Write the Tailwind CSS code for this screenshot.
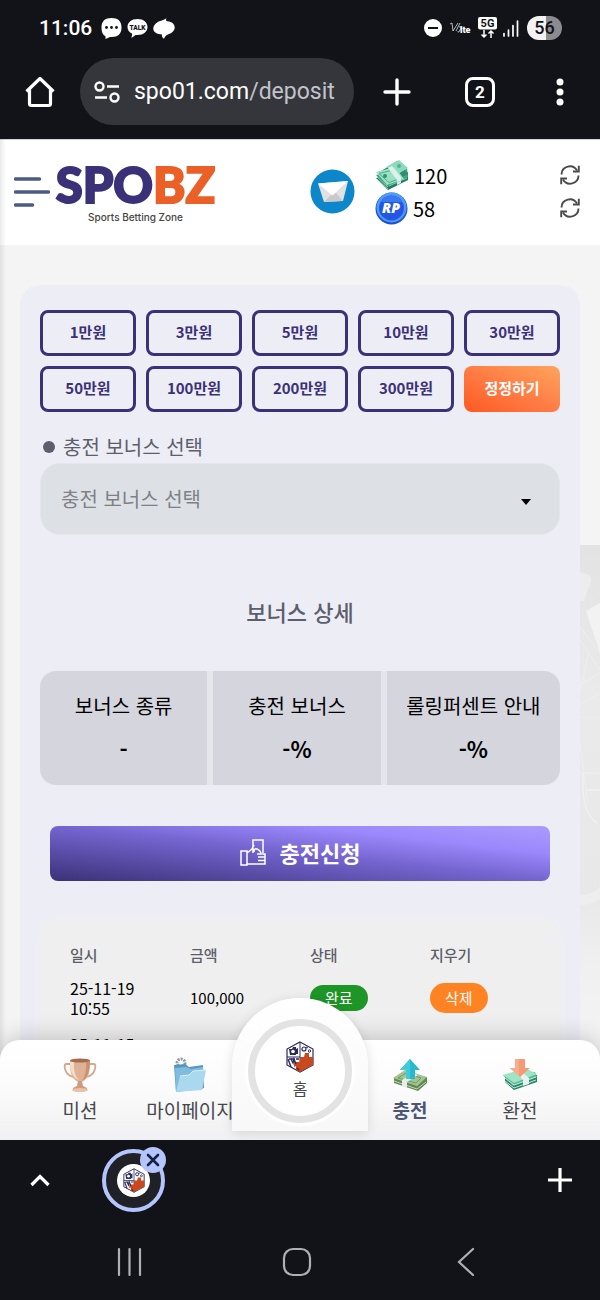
<!doctype html>
<html lang="ko">
<head>
  <meta charset="utf-8">
  <meta name="viewport" content="width=device-width, initial-scale=1">
  <title>SPOBZ</title>
  <script src="https://cdn.jsdelivr.net/npm/@tailwindcss/browser@4"></script>
</head>
<body class="h-screen flex flex-col overflow-hidden antialiased bg-[#121318] font-['Noto_Sans_CJK_KR',sans-serif]">

<!-- Shared icons -->
<svg class="hidden">
  <symbol id="cube" viewBox="0 0 28 32">
    <path d="M14 1 27 8v16L14 31 1 24V8Z" fill="#fff" stroke="#2c2a5e" stroke-width="1.2" />
    <path d="M1 16h13V1M14 16v15" fill="none" stroke="#2c2a5e" stroke-width="1" />
    <path d="M14 16h4l1-4h4v4h4v8l-13 7-4-2v-4l-2 1v-5h6Z" fill="#c9481d" />
    <path d="M3 8h3l1-2h3v2l2-1v6h-2v1H4Z" fill="#2c2a5e" />
    <circle cx="7" cy="10.500" r="1.800" fill="#fff" />
    <path d="M2 18l3 8M5 18l2 4 1-4 2 5M10 18h3M3 18h6M11 27l2 2" stroke="#2c2a5e" stroke-width="1.400" fill="none" />
    <circle cx="18" cy="8" r="2" fill="none" stroke="#2c2a5e" stroke-width="1.200" />
    <circle cx="23.500" cy="10" r="1.200" fill="none" stroke="#2c2a5e" />
    <path d="M20 6l2 1" stroke="#2c2a5e" />
  </symbol>
  <symbol id="refresh" viewBox="0 0 20 20">
    <g fill="none" stroke="#4a4a4a" stroke-width="1.900">
      <path d="M1.500 9.500a8.300 8.300 0 0 1 15.500-4M18.500 10.500a8.300 8.300 0 0 1-15.500 4" />
      <path d="M18.800.8v5.700h-5.800M1.200 19.200v-5.700h5.800" />
    </g>
  </symbol>
</svg>

<!-- Status bar -->
<div class="flex items-center h-14 shrink-0 pl-[39px] pr-[38px] text-white font-[Roboto,sans-serif]">
  <span class="text-[21px] leading-7 font-medium mr-[9px]">11:06</span>
  <div class="flex items-center gap-[5px]">
    <svg class="w-[21px] h-[21px]" viewBox="0 0 21 21">
      <path d="M10.500 0C17 0 20.500 3 20.500 9.500S17 19 10.500 19H9l-4.500 2v-2.700C1.500 17 .5 14 .5 9.500.5 3 4 0 10.500 0Z" fill="#fff" />
      <g fill="#121318"><circle cx="5.500" cy="9.500" r="1.400" /><circle cx="10.500" cy="9.500" r="1.400" /><circle cx="15.500" cy="9.500" r="1.400" /></g>
    </svg>
    <svg class="w-[21px] h-[21px]" viewBox="0 0 21 21">
      <path d="M10.500 1C16.500 1 20.500 4.500 20.500 9s-4 8-10 8c-1 0-1.500 0-2 0L4.500 20l.7-4.200C2.200 14.300.5 12 .5 9c0-4.500 4-8 10-8Z" fill="#fff" />
      <text x="10.500" y="11.500" text-anchor="middle" font-size="6.500" font-weight="900" fill="#121318">TALK</text>
    </svg>
    <svg class="w-[22px] h-[21px]" viewBox="0 0 22 21">
      <path d="M13.500.2C12.500 2 13 3 14.500 3.200c4.500.5 7.200 3 7.200 6.300 0 3.500-3 5.500-6.200 6.800-2.500 1-3.500 2.200-4.500 4.500-1.500-1-2.500-2.500-2-4.300C4 16.500.3 14 .3 10.800c0-3.700 3-6 6-7.500C9 2.500 11 1.500 13.500.2Z" fill="#fff" />
    </svg>
  </div>
  <div class="flex items-center ml-auto">
    <svg class="w-[18px] h-[18px] mr-2" viewBox="0 0 18 18"><circle cx="9" cy="9" r="9" fill="#fff" /><path d="M4 9h10" stroke="#121318" stroke-width="2" /></svg>
    <svg class="w-[23px] h-[14px] mr-[5px]" viewBox="0 0 23 14">
      <path d="M0 3l2-1 1 8L8 2M6 10l4-8M9 6q3-1 1 3t-2 1" fill="none" stroke="#ddd" stroke-width=".8" />
      <text x="10" y="11.500" font-size="9" font-weight="900" fill="#fff">lte</text>
    </svg>
    <svg class="w-[19px] h-[22px] mr-[6px]" viewBox="0 0 19 22">
      <rect width="19" height="12.500" rx="2" fill="#fff" />
      <text x="9.500" y="10" text-anchor="middle" font-size="11" font-weight="700" fill="#121318">5G</text>
      <path d="M6 13v7M3.500 17.500 6 20l2.500-2.500M13 21v-7M10.500 16.500 13 14l2.500 2.500" fill="none" stroke="#fff" stroke-width="1.500" />
    </svg>
    <svg class="w-[16px] h-[17px] mr-2" viewBox="0 0 16 17"><path d="M1 13.500V16M5.500 10v6M10 5.500V16M14.500 1v15" stroke="#fff" stroke-width="1.700" stroke-linecap="round" /></svg>
    <span class="h-6 w-[35px] rounded-full text-center text-[18px] leading-6 font-medium text-[#121318] bg-linear-to-r from-[#f2f2f2] from-55% to-[#8c8c8f] to-55%">56</span>
  </div>
</div>

<!-- Browser toolbar -->
<div class="flex items-center h-[83px] shrink-0 pb-3 pl-6 pr-9 text-white font-[Roboto,sans-serif]">
  <button type="button" aria-label="Home">
    <svg class="w-8 h-8" viewBox="0 0 32 32"><path d="M2.500 15.500 16 2.500l13.500 13M5.500 13v14.500a2 2 0 0 0 2 2h17a2 2 0 0 0 2-2V13" fill="none" stroke="#fff" stroke-width="3.200" stroke-linejoin="round" /></svg>
  </button>
  <div class="flex items-center gap-[14px] flex-1 h-[67px] ml-6 mr-[29px] pl-[14px] pr-3 rounded-full bg-[#35363b]">
    <svg class="w-[26px] h-[22px] shrink-0" viewBox="0 0 26 22">
      <g fill="none" stroke="#fff" stroke-width="2.400"><circle cx="5.500" cy="5.500" r="4" /><path d="M13 5.500h12M1 16.500h12" /><circle cx="20.500" cy="16.500" r="4" /></g>
    </svg>
    <p class="text-[23px] leading-8 whitespace-nowrap">spo01.com<span class="text-[#c3c4cb]">/deposit</span></p>
  </div>
  <button type="button" aria-label="New tab">
    <svg class="w-7 h-7" viewBox="0 0 28 28"><path d="M14 2v24M2 14h24" stroke="#fff" stroke-width="3.400" stroke-linecap="round" /></svg>
  </button>
  <button type="button" class="size-[30px] ml-[54px] rounded-lg border-3 border-white text-[17px] leading-6 font-bold">2</button>
  <button type="button" aria-label="Menu" class="ml-[61px]">
    <svg class="w-2 h-7" viewBox="0 0 8 28"><g fill="#fff"><circle cx="4" cy="4" r="3.500" /><circle cx="4" cy="14" r="3.500" /><circle cx="4" cy="24" r="3.500" /></g></svg>
  </button>
</div>

<!-- Site -->
<div class="relative flex flex-col flex-1 min-h-0 overflow-hidden bg-[#f4f4f4]">
  <header class="flex items-center h-[106px] shrink-0 pb-[2px] pl-[14px] pr-5 bg-white border-t border-gray-300">
    <button type="button" aria-label="메뉴">
      <svg class="w-9 h-[30px]" viewBox="0 0 36 30"><path d="M1.500 2h24M1.500 15h33M1.500 28h17" stroke="#4d5b80" stroke-width="3.500" stroke-linecap="round" /></svg>
    </button>
    <a href="#" class="flex flex-col items-center w-[155px] ml-2">
      <span class="font-[Lato,sans-serif] text-[49px] leading-[50px] font-black text-[#3b3178] [-webkit-text-stroke:2px]">SPO<span class="text-[#ea6027]">BZ</span></span>
      <span class="font-[Inter,sans-serif] text-[10px] leading-4 font-medium text-[#444]">Sports Betting Zone</span>
    </a>
    <button type="button" aria-label="쪽지" class="ml-auto mr-5">
      <svg class="size-[45px]" viewBox="0 0 45 45">
        <circle cx="22.500" cy="22.500" r="22" fill="#0c87c9" />
        <path d="M8 14.500 38 12l-5 20-19 1Z" fill="#e1e1e3" />
        <path d="M14 33l8-8 4-1 7 8Z" fill="#c9c9cc" />
        <path d="M8 14.500 38 12 22.500 26.500Z" fill="#fff" />
      </svg>
    </button>
    <div class="flex flex-col w-[205px] text-[20px] leading-[33px]">
      <div class="flex items-center">
        <svg class="w-[34px] h-[32px] mr-[5px]" viewBox="0 0 34 32">
          <path d="M1 19 13 31 33 21V13Z" fill="#207a62" />
          <path d="M1 16 12 28 33 18 32 9Z" fill="#42a887" />
          <path d="M3 14 22 2 33 15 13 26Z" fill="#2c8f73" />
          <path d="M11 8 24 1 33 9 23 15Z" fill="#8cdabb" />
          <path d="M1 13 20 8 29 20 12 26Z" fill="#9ae1c4" />
          <path d="M4 14.500 18 11l7 8.500-11 4Z" fill="none" stroke="#4eb08f" />
          <circle cx="10" cy="17" r="2" fill="#358f73" /><circle cx="24" cy="7" r="2" fill="#53b492" />
          <path d="M13 9l4-2 9 11v6l-4 2v-5Z" fill="#def0ed" />
          <path d="M2 18l11 10M2 20l11 10M14 27l18-8" stroke="#95d6bd" stroke-width=".8" />
        </svg>
        <span>120</span>
        <button type="button" aria-label="새로고침" class="ml-auto"><svg class="size-5"><use href="#refresh" /></svg></button>
      </div>
      <div class="flex items-center">
        <svg class="size-[33px] mr-[5px]" viewBox="0 0 33 33">
          <circle cx="16.500" cy="16.500" r="16" fill="#1d50cc" />
          <circle cx="16.500" cy="15.500" r="15" fill="#4f9bf8" />
          <circle cx="16.500" cy="16" r="12.500" fill="#2356e4" />
          <path d="M6 10a12 12 0 0 1 21 0Z" fill="#3a78f4" />
          <text x="16" y="21" text-anchor="middle" font-family="Open Sans" font-size="14" font-weight="800" font-style="italic" fill="#fff">RP</text>
        </svg>
        <span>58</span>
        <button type="button" aria-label="새로고침" class="ml-auto"><svg class="size-5"><use href="#refresh" /></svg></button>
      </div>
    </div>
  </header>

  <main class="relative px-5">
    <!-- Faded cards behind the panel -->
    <svg class="absolute right-0 top-[300px] w-5 h-[500px]" viewBox="0 0 20 500">
      <defs>
        <linearGradient id="fade" x1="0" y1="0" x2="0" y2="1">
          <stop offset="0" stop-color="#e3e3e3" /><stop offset=".3" stop-color="#eaeaea" /><stop offset=".7" stop-color="#e8e8e8" /><stop offset=".85" stop-color="#f0f0f0" /><stop offset="1" stop-color="#f4f4f4" />
        </linearGradient>
      </defs>
      <path d="M0 0h20v500H0Z" fill="url(#fade)" />
      <path d="M0 27l9 3q3 3 2 6L4 56H0Z" fill="#ededed" />
      <path d="M6 66 20 58v50Z" fill="#f2f2f2" />
      <path d="M0 82 20 108M0 95l20 30M0 140l20-12M0 160l20-12M8 110l-8 36M0 172h20M0 200l8 60M0 228h20" fill="none" stroke="#efefef" />
      <path d="M3 228q-2 40 14 50M6 245h14" fill="none" stroke="#f0f0f0" stroke-width="1.500" />
      <path d="M0 350q12 0 20-8v12q-10 6-20 6Z" fill="#eeeeee" />
    </svg>

    <form class="relative mt-10 px-5 pt-[25px] pb-10 rounded-[20px] bg-[#ededf6]">
      <div class="grid grid-cols-5 gap-[10px] text-[15px] leading-5 font-bold text-[#3b3178]">
        <button type="button" class="h-[46px] pb-[2px] rounded-lg border-3 border-[#3b3178]">1만원</button>
        <button type="button" class="h-[46px] pb-[2px] rounded-lg border-3 border-[#3b3178]">3만원</button>
        <button type="button" class="h-[46px] pb-[2px] rounded-lg border-3 border-[#3b3178]">5만원</button>
        <button type="button" class="h-[46px] pb-[2px] rounded-lg border-3 border-[#3b3178]">10만원</button>
        <button type="button" class="h-[46px] pb-[2px] rounded-lg border-3 border-[#3b3178]">30만원</button>
        <button type="button" class="h-[46px] pb-[2px] rounded-lg border-3 border-[#3b3178]">50만원</button>
        <button type="button" class="h-[46px] pb-[2px] rounded-lg border-3 border-[#3b3178]">100만원</button>
        <button type="button" class="h-[46px] pb-[2px] rounded-lg border-3 border-[#3b3178]">200만원</button>
        <button type="button" class="h-[46px] pb-[2px] rounded-lg border-3 border-[#3b3178]">300만원</button>
        <button type="reset" class="h-[46px] pb-[2px] rounded-lg text-white bg-linear-to-tr from-[#ff571f] via-[#ff7d45] to-[#ffa45c]">정정하기</button>
      </div>

      <label for="bonus" class="flex items-center gap-2 mt-[19px] pl-[3px] text-[20px] leading-8 text-[#5c5f6b]">
        <span class="size-3 rounded-full bg-[#5c5f6b]"></span>
        충전 보너스 선택
      </label>
      <div class="relative">
        <select id="bonus" class="block appearance-none w-full h-[72px] px-5 rounded-[20px] border border-[#e4e6ec] bg-[#dde1e6] text-[20px] text-[#7e8187]">
          <option>충전 보너스 선택</option>
        </select>
        <svg class="absolute right-[29px] top-9 w-[10px] h-[6px] pointer-events-none" viewBox="0 0 10 6"><path d="M0 0h10L5 6Z" /></svg>
      </div>

      <h2 class="mt-[60px] text-[22px] leading-8 font-medium text-center text-[#5c5f6b]">보너스 상세</h2>

      <div class="grid grid-cols-[167fr_167fr_173fr] gap-[6px] mt-11 rounded-[16px] overflow-hidden bg-[#e5e6ec] text-center text-[20px] leading-[30px]">
        <div class="pt-5 pb-[22px] space-y-3 bg-[#d5d5de]"><p>보너스 종류</p><p class="text-[22px] font-bold">-</p></div>
        <div class="pt-5 pb-[22px] space-y-3 bg-[#d5d5de]"><p>충전 보너스</p><p class="text-[22px] font-bold">-%</p></div>
        <div class="pt-5 pb-[22px] space-y-3 bg-[#d5d5de]"><p>롤링퍼센트 안내</p><p class="text-[22px] font-bold">-%</p></div>
      </div>

      <div class="px-[10px] mt-[41px]">
        <button type="submit" class="flex items-center justify-center gap-[14px] w-full h-[55px] pb-[2px] rounded-lg text-[22px] font-bold text-white bg-[linear-gradient(to_top_right,#3b3178,#7464cf_50%,#9b88fc_75%,#ab9bfc)]">
          <svg class="w-[26px] h-[27px]" viewBox="0 0 26 27">
            <g fill="none" stroke="#fff" stroke-width="1.500"><path d="M1 12h6v14H1ZM7 25h18V15h-8M7 14l5-4 2-4M13 14V1h10v13M14 13q0-4 3-3t4 4M18 18h7M18 21.500h7" /></g>
          </svg>
          충전신청
        </button>
      </div>

      <div class="mt-[39px] pt-5 pl-[30px] pr-[10px] pb-10 rounded-[20px] bg-[#efefef] shadow-[0_0_12px_#efefef]">
        <table class="w-full table-fixed text-left text-[15px]">
          <thead class="leading-[30px] text-[#5c5f6b]">
            <tr><th class="font-medium">일시</th><th class="font-medium">금액</th><th class="font-medium">상태</th><th class="font-medium">지우기</th></tr>
          </thead>
          <tbody class="leading-5">
            <tr>
              <td class="py-2 text-[16px]">25-11-19<br>10:55</td>
              <td>100,000</td>
              <td><span class="inline-block px-[15px] py-[3px] rounded-full bg-[#1d9527] text-white">완료</span></td>
              <td><button type="button" class="px-[15px] py-[5px] rounded-full bg-[#ff8322] text-white">삭제</button></td>
            </tr>
            <tr>
              <td class="py-2 text-[16px]">25-11-15</td>
              <td></td>
              <td></td>
              <td></td>
            </tr>
          </tbody>
        </table>
      </div>
    </form>
  </main>
  <div class="absolute left-0 inset-y-0 w-[6px] bg-linear-to-r from-black/8 to-transparent"></div>

  <!-- Bottom tabs -->
  <nav class="absolute bottom-0 inset-x-0 grid grid-cols-5 h-[100px] px-[25px] rounded-t-[20px] bg-linear-to-b from-white via-[#fbfbfb] to-[#f0f0f2] shadow-[0_-2px_24px_rgb(0_0_0/0.2)] text-[19px] leading-7 text-[#46484e]">
    <a href="#" class="flex flex-col items-center pt-[17px] gap-[3px] whitespace-nowrap">
      <svg class="size-9" viewBox="0 0 36 36">
        <path d="M9 7H4q-2 0-1 5 2 7 9 8M27 7h5q2 0 1 5-2 7-9 8" fill="none" stroke="#d3a78b" stroke-width="1.800" />
        <path d="M8 3h20q1 21-10 22Q7 24 8 3Z" fill="#dfb295" />
        <path d="M12 5q-1 13 5 18-9-3-9-18Z" fill="#f7dcc8" /><path d="M28 4q0 16-8 20 5-8 4-19Z" fill="#c99373" />
        <ellipse cx="18" cy="3.500" rx="10" ry="2" fill="#a56b4d" />
        <path d="M16 24h4l1 5 4 2v3H11v-3l4-2Z" fill="#cd9c80" /><ellipse cx="18" cy="33" rx="8" ry="2" fill="#e8c1a9" />
      </svg>
      <span>미션</span>
    </a>
    <a href="#" class="flex flex-col items-center pt-[17px] gap-[3px] whitespace-nowrap">
      <svg class="size-9" viewBox="0 0 36 36">
        <circle cx="9" cy="6" r="4" fill="none" stroke="#8c9aa5" stroke-width="3" stroke-dasharray="2 1" />
        <path d="M2 8l11-1 4 3 14-2 1 23-28 4Z" fill="#5996bd" />
        <path d="M3 11l11-1 5 2 12-2v22l-27 3Z" fill="#80bcdd" />
        <path d="M8 19l9-1 4-4 13-1-4 20L4 35Z" fill="#a9d8ef" />
        <path d="M8 19l9-1 4-4 13-1" fill="none" stroke="#d7effa" />
      </svg>
      <span>마이페이지</span>
    </a>
    <div class="relative">
      <a href="#" class="absolute bottom-[9px] -left-[13px] -right-[13px] flex flex-col items-center h-[133px] pt-[21px] rounded-t-full bg-linear-to-b from-white to-[#f8f8f8] shadow-[0_2px_12px_rgb(0_0_0/0.12)]">
        <span class="flex flex-col items-center size-[104px] pt-[15px] rounded-full border-[7px] border-[#e3e3e3] bg-white shadow-[0_0_0_3px_white] text-[16px] leading-[30px]">
          <svg class="w-7 h-8 shrink-0"><use href="#cube" /></svg>
          홈
        </span>
      </a>
    </div>
    <a href="#" class="flex flex-col items-center pt-[17px] gap-[3px] whitespace-nowrap font-bold text-[#4a5578]">
      <svg class="size-9" viewBox="0 0 36 36">
        <path d="M2 20v6l24 8 9-8v-6Z" fill="#5f8957" />
        <path d="M1 21 13 13l22 7-10 9Z" fill="#a3c490" /><path d="M6 21l8-5 15 5-5 5Z" fill="none" stroke="#6f9c67" />
        <path d="M2 24l23 8 9-7" fill="none" stroke="#c2d8b2" />
        <path d="M10 23l11-7 5 2-11 7v6l-5-2Z" fill="#e9ece7" />
        <path d="M18 2 28 13h-5v9h-9v-9H8Z" fill="#29b9cf" /><path d="M18 2v20h-4v-9H8Z" fill="#3fcbdc" />
      </svg>
      <span>충전</span>
    </a>
    <a href="#" class="flex flex-col items-center pt-[17px] gap-[3px] whitespace-nowrap">
      <svg class="size-9" viewBox="0 0 36 36">
        <path d="M3 19v6l9 8 23-8v-7Z" fill="#27866a" />
        <path d="M1 18 11 29l24-9-2-5Z" fill="#58b895" /><path d="M1 18 23 11l12 6-23 9Z" fill="#a0e4c8" />
        <path d="M3 24l9 7 22-8M3 21l9 7 22-8" fill="none" stroke="#c4eddd" />
        <path d="M14 15l5-1 8 7v6l-6 2v-6Z" fill="#e7f1ef" />
        <path d="M13 2h10v9h5L18 20 8 11h5Z" fill="#f59a74" /><path d="M13 2h4v17l-9-8h5Z" fill="#f8ac8b" />
      </svg>
      <span>환전</span>
    </a>
  </nav>
</div>

<!-- Browser tab strip -->
<div class="flex items-center h-20 shrink-0 px-7">
  <button type="button" aria-label="Expand"><svg class="w-6 h-4" viewBox="0 0 24 16"><path d="M3.500 13 12 4.500 20.500 13" fill="none" stroke="#fff" stroke-width="3.200" /></svg></button>
  <div class="relative flex items-center justify-center size-[63px] ml-[50px] rounded-full border-4 border-[#b3c5fc] bg-[#202126]">
    <span class="flex items-center justify-center size-[33px] rounded-full bg-white"><svg class="w-[22px] h-[25px]"><use href="#cube" /></svg></span>
    <button type="button" aria-label="Close tab" class="absolute -top-[6px] -right-[5px] size-[26px] rounded-full bg-[#b3c5fc]">
      <svg class="size-full" viewBox="0 0 26 26"><path d="M8 8l10 10M18 8 8 18" stroke="#16213f" stroke-width="2.600" stroke-linecap="round" /></svg>
    </button>
  </div>
  <button type="button" aria-label="New tab" class="ml-auto"><svg class="size-6" viewBox="0 0 24 24"><path d="M12 0v24M0 12h24" stroke="#fff" stroke-width="3.200" /></svg></button>
</div>

<!-- System navigation -->
<div class="flex items-center h-20 shrink-0 pt-[3px] pl-[116px] pr-[124px]">
  <button type="button" aria-label="Recents"><svg class="w-[27px] h-[30px]" viewBox="0 0 27 30"><path d="M3 2v26M13.500 2v26M24 2v26" stroke="#b0b0b2" stroke-width="2.200" stroke-linecap="round" /></svg></button>
  <button type="button" aria-label="Home screen" class="ml-[139px]"><svg class="size-[30px]" viewBox="0 0 30 30"><rect x="2" y="2" width="26" height="26" rx="9" fill="none" stroke="#b0b0b2" stroke-width="2.200" /></svg></button>
  <button type="button" aria-label="Back" class="ml-auto"><svg class="w-5 h-[30px]" viewBox="0 0 20 30"><path d="M17 2 3 15l14 13" fill="none" stroke="#b0b0b2" stroke-width="2.200" stroke-linecap="round" /></svg></button>
</div>
</body>
</html>
